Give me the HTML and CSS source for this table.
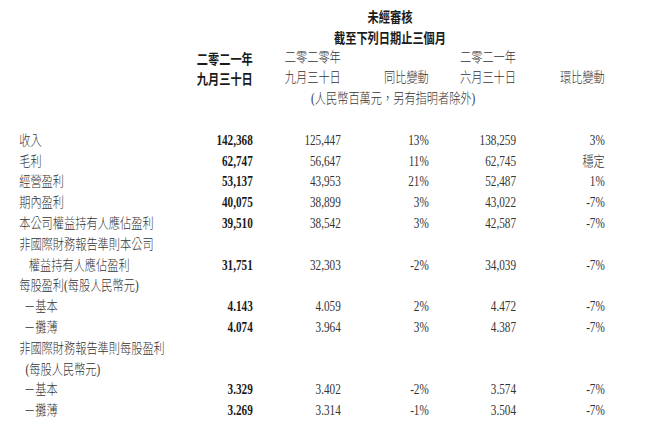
FILE: index.html
```html
<!DOCTYPE html>
<html lang="zh-Hant">
<head>
<meta charset="utf-8">
<title>未經審核</title>
<link rel="stylesheet" href="styles.css">
</head>
<body>
<div class="page">
  <div class="sheet">
    <div class="row"><span class="title">未經審核</span></div>
    <div class="row"><span class="title">截至下列日期止三個月</span></div>
    <div class="row">
      <span></span><span class="num bh">二零二一年</span><span class="num">二零二零年</span><span></span><span class="num">二零二一年</span><span></span>
    </div>
    <div class="row">
      <span></span><span class="num bh">九月三十日</span><span class="num">九月三十日</span><span class="num">同比變動</span><span class="num">六月三十日</span><span class="num">環比變動</span>
    </div>
    <div class="row"><span class="unit">(人民幣百萬元，另有指明者除外)</span></div>
    <div class="row"></div>
    <div class="row"><span class="lbl">收入</span><span class="num b">142,368</span><span class="num">125,447</span><span class="num">13%</span><span class="num">138,259</span><span class="num">3%</span></div>
    <div class="row"><span class="lbl">毛利</span><span class="num b">62,747</span><span class="num">56,647</span><span class="num">11%</span><span class="num">62,745</span><span class="num">穩定</span></div>
    <div class="row"><span class="lbl">經營盈利</span><span class="num b">53,137</span><span class="num">43,953</span><span class="num">21%</span><span class="num">52,487</span><span class="num">1%</span></div>
    <div class="row"><span class="lbl">期內盈利</span><span class="num b">40,075</span><span class="num">38,899</span><span class="num">3%</span><span class="num">43,022</span><span class="num">-7%</span></div>
    <div class="row"><span class="lbl">本公司權益持有人應佔盈利</span><span class="num b">39,510</span><span class="num">38,542</span><span class="num">3%</span><span class="num">42,587</span><span class="num">-7%</span></div>
    <div class="row"><span class="lbl">非國際財務報告準則本公司</span></div>
    <div class="row"><span class="lbl ind">權益持有人應佔盈利</span><span class="num b">31,751</span><span class="num">32,303</span><span class="num">-2%</span><span class="num">34,039</span><span class="num">-7%</span></div>
    <div class="row"><span class="lbl">每股盈利(每股人民幣元)</span></div>
    <div class="row"><span class="lbl sub">－基本</span><span class="num b">4.143</span><span class="num">4.059</span><span class="num">2%</span><span class="num">4.472</span><span class="num">-7%</span></div>
    <div class="row"><span class="lbl sub">－攤薄</span><span class="num b">4.074</span><span class="num">3.964</span><span class="num">3%</span><span class="num">4.387</span><span class="num">-7%</span></div>
    <div class="row"><span class="lbl">非國際財務報告準則每股盈利</span></div>
    <div class="row"><span class="lbl sub2">(每股人民幣元)</span></div>
    <div class="row"><span class="lbl sub">－基本</span><span class="num b">3.329</span><span class="num">3.402</span><span class="num">-2%</span><span class="num">3.574</span><span class="num">-7%</span></div>
    <div class="row"><span class="lbl sub">－攤薄</span><span class="num b">3.269</span><span class="num">3.314</span><span class="num">-1%</span><span class="num">3.504</span><span class="num">-7%</span></div>
  </div>
</div>
</body>
</html>
```
FILE: styles.css
```css
html, body {
  margin: 0;
  padding: 0;
  background: #ffffff;
}
.page {
  width: 664px;
  height: 428px;
  overflow: hidden;
}
.sheet {
  width: 830px;
  padding: 6px 0 0 24px;
  box-sizing: border-box;
  transform: scaleX(0.8);
  transform-origin: left top;
  font-family: "Liberation Serif", "Noto Sans CJK TC", serif;
  font-size: 14px;
  color: #333333;
  font-weight: 300;
}
.row {
  display: grid;
  grid-template-columns: 182px 110px 110px 110px 109px 111px;
  height: 20.8px;
  line-height: 20.8px;
  white-space: nowrap;
}
.num {
  text-align: right;
}
.b {
  font-weight: 700;
  color: #1a1a1a;
}
.bh {
  font-family: "Noto Sans CJK TC", sans-serif;
  font-weight: 700;
  color: #1a1a1a;
}
.title {
  grid-column: 3 / 6;
  padding-left: 14px;
  text-align: center;
  font-family: "Noto Sans CJK TC", sans-serif;
  font-weight: 700;
  color: #1a1a1a;
}
.unit {
  grid-column: 3 / 6;
  padding-left: 22px;
  text-align: center;
}
.lbl {
  text-align: left;
}
.ind {
  padding-left: 12px;
}
.sub {
  padding-left: 6px;
}
.sub2 {
  padding-left: 8px;
}
```
